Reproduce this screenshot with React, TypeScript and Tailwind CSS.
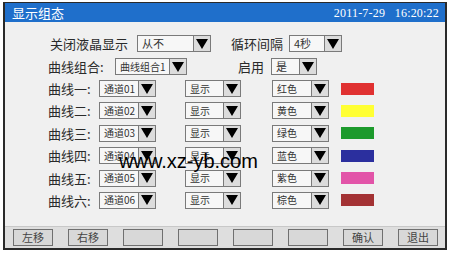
import React from "react";

const cjk = { fontFamily: '"Noto Sans CJK SC", "Liberation Serif", serif' };

function Drop({ text, w, aw = 17, small = false }: { text: string; w: number; aw?: number; small?: boolean }) {
  return (
    <div className="flex h-[17px] border border-[#7a7a7a] bg-[#f7f7f7]" style={{ width: w }}>
      <div className={`flex-1 flex items-center pl-[4px] ${small ? "text-[10px]" : "text-[11px]"} text-[#333] leading-none`}>{text}</div>
      <div className="flex items-center justify-center border-l border-[#7a7a7a] bg-[#dcdcdc]" style={{ width: aw }}>
        <svg width="12" height="10" viewBox="0 0 12 10"><polygon points="0,0 12,0 6,10" fill="#000" /></svg>
      </div>
    </div>
  );
}

const curves = [
  { n: "一", ch: "通道01", c: "红色", col: "#e03131" },
  { n: "二", ch: "通道02", c: "黄色", col: "#ffff33" },
  { n: "三", ch: "通道03", c: "绿色", col: "#1c9a2c" },
  { n: "四", ch: "通道04", c: "蓝色", col: "#2b2f9e" },
  { n: "五", ch: "通道05", c: "紫色", col: "#e254a8" },
  { n: "六", ch: "通道06", c: "棕色", col: "#a33234" },
];

const buttons = ["左移", "右移", "", "", "", "", "确认", "退出"];

export default function App() {
  return (
    <div className="w-[450px] h-[253px] bg-white pt-[2px] pl-[3px] pr-[3px] pb-[3px] relative" style={cjk}>
      <div className="w-full h-full border-2 border-[#2a2a2a] border-t-[1px] flex flex-col bg-[#f0f0f0]">
        <div className="h-[19px] bg-[#1f6fcb] flex items-center justify-between pl-[7px] pr-[6px] text-white">
          <span className="text-[13px] leading-none">显示组态</span>
          <span className="text-[12px] leading-none tracking-[0.2px]" style={{ fontFamily: '"Liberation Serif", serif' }}>2011-7-29&nbsp;&nbsp;&nbsp;16:20:22</span>
        </div>
        <div className="flex-1 flex flex-col pt-[13px] text-[#2a2a2a]">
          <div className="flex items-center h-[17px]">
            <span className="ml-[45px] w-[87px] text-[13px] leading-none">关闭液晶显示</span>
            <Drop text="从不" w={74} />
            <span className="ml-[20px] w-[58px] text-[13px] leading-none">循环间隔</span>
            <Drop text="4秒" w={53} />
          </div>
          <div className="flex items-center h-[17px] mt-[6px]">
            <span className="ml-[43px] w-[67px] text-[13px] leading-none">曲线组合:</span>
            <Drop text="曲线组合1" w={72} small />
            <span className="ml-[51px] w-[33px] text-[13px] leading-none">启用</span>
            <Drop text="是" w={46} />
          </div>
          <div className="flex flex-col gap-[5.4px] mt-[5px]">
            {curves.map((r) => (
              <div key={r.n} className="flex items-center h-[17px]">
                <span className="ml-[43px] w-[51px] text-[13px] leading-none">曲线{r.n}:</span>
                <Drop text={r.ch} w={57} small />
                <div className="w-[29px]" />
                <Drop text="显示" w={56} small />
                <div className="w-[31px]" />
                <Drop text={r.c} w={57} small />
                <div className="w-[12px]" />
                <div className="w-[33px] h-[12px]" style={{ background: r.col }} />
              </div>
            ))}
          </div>
          <div className="flex-1" />
          <div className="h-[22px] bg-[#dedede] border-t border-[#c8c8c8] flex items-center pl-[8px] gap-[15px]">
            {buttons.map((b, i) => (
              <div key={i} className="w-[40px] h-[17px] border border-[#707070] bg-[#d8d8d8] flex items-center justify-center text-[11px] text-[#444] leading-none">{b}</div>
            ))}
          </div>
        </div>
      </div>
      <div className="absolute left-[119px] top-[151px] text-[20px] leading-none text-black" style={{ fontFamily: '"Liberation Sans", Arial, sans-serif' }}>www.xz-yb.com</div>
    </div>
  );
}
